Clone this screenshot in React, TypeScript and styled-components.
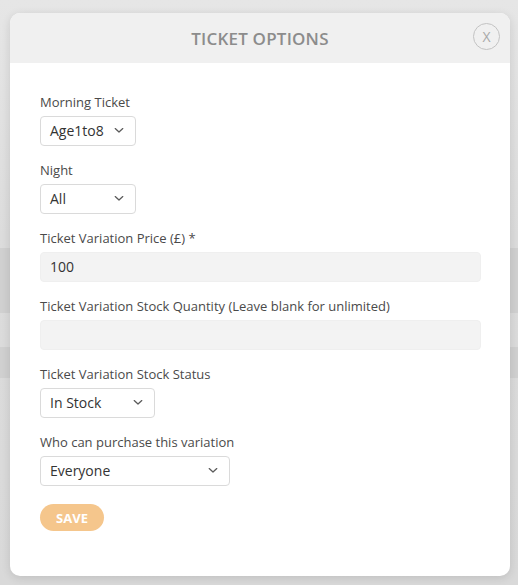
import React from "react";
import styled, { createGlobalStyle } from "styled-components";

const Global = createGlobalStyle`
  html, body { margin: 0; padding: 0; }
  body {
    width: 518px;
    height: 585px;
    overflow: hidden;
    background: #dedede;
    font-family: "Open Sans", "Noto Sans", Arial, sans-serif;
  }
`;

const Page = styled.div`
  position: relative;
  width: 518px;
  height: 585px;
  display: flex;
  flex-direction: column;
  background: linear-gradient(#e6e6e6, #dcdcdc 40%, #d9d9d9);
`;

const Band = styled.div<{ $h: number; $dark?: boolean }>`
  height: ${(p) => p.$h}px;
  background: ${(p) => (p.$dark ? "#d0d0d0" : "transparent")};
`;

const Modal = styled.div`
  position: absolute;
  left: 10px;
  top: 13px;
  width: 500px;
  height: 563px;
  background: #fff;
  border-radius: 10px;
  overflow: hidden;
  box-shadow: 0 2px 10px rgba(0, 0, 0, 0.12);
  display: flex;
  flex-direction: column;
`;

const Header = styled.div`
  position: relative;
  height: 50px;
  background: #f0f0f0;
  display: flex;
  align-items: center;
  justify-content: center;
`;

const Title = styled.h2`
  margin: 0;
  font-size: 17px;
  font-weight: 600;
  color: #8c8c8c;
  letter-spacing: 0.2px;
`;

const Close = styled.button`
  position: absolute;
  right: 10px;
  top: 10px;
  width: 27px;
  height: 27px;
  border-radius: 50%;
  border: 1px solid #c2c2c2;
  background: transparent;
  color: #a8a8a8;
  font-family: "Open Sans", Arial, sans-serif;
  font-size: 14px;
  font-weight: 400;
  padding: 0 0 1px;
  display: flex;
  align-items: center;
  justify-content: center;
`;

const Body = styled.div`
  padding: 30px 29px 0 30px;
  display: flex;
  flex-direction: column;
`;

const Group = styled.div`
  display: flex;
  flex-direction: column;
  align-items: flex-start;
  margin-bottom: 15px;
`;

const Label = styled.label`
  font-size: 13px;
  line-height: 18px;
  color: #4a4a4a;
  margin-bottom: 5px;
`;

const SelectBox = styled.div<{ $w: number }>`
  box-sizing: border-box;
  width: ${(p) => p.$w}px;
  height: 30px;
  border: 1px solid #dadada;
  border-radius: 4px;
  background: #fff;
  display: flex;
  align-items: center;
  justify-content: space-between;
  padding: 0 11px 1px 9px;
  font-size: 14px;
  color: #333;
`;

const Input = styled.div`
  box-sizing: border-box;
  width: 441px;
  height: 30px;
  border: 1px solid #efefef;
  border-radius: 4px;
  background: #f3f3f3;
  display: flex;
  align-items: center;
  padding: 0 9px 1px;
  font-size: 14px;
  color: #333;
`;

const Save = styled.button`
  margin-top: 3px;
  align-self: flex-start;
  width: 64px;
  height: 27px;
  border: none;
  border-radius: 14px;
  background: #f5c68c;
  color: #fff;
  font-family: "Open Sans", Arial, sans-serif;
  font-size: 13px;
  font-weight: 700;
  padding: 0;
`;

const Chevron = () => (
  <svg width="10" height="7" viewBox="0 0 10 7" fill="none">
    <path d="M1.2 1.6 L5 5 L8.8 1.6" stroke="#5a5a5a" strokeWidth="1.3" strokeLinecap="round" strokeLinejoin="round" />
  </svg>
);

const Select = ({ w, value }: { w: number; value: string }) => (
  <SelectBox $w={w}>
    <span>{value}</span>
    <Chevron />
  </SelectBox>
);

export default function App() {
  return (
    <>
      <Global />
      <Page>
        <Band $h={248} />
        <Band $h={65} $dark />
        <Band $h={34} />
        <Band $h={31} $dark />
        <Modal>
          <Header>
            <Title>TICKET OPTIONS</Title>
            <Close>X</Close>
          </Header>
          <Body>
            <Group>
              <Label>Morning Ticket</Label>
              <Select w={96} value="Age1to8" />
            </Group>
            <Group>
              <Label>Night</Label>
              <Select w={96} value="All" />
            </Group>
            <Group>
              <Label>Ticket Variation Price (£) *</Label>
              <Input>100</Input>
            </Group>
            <Group>
              <Label>Ticket Variation Stock Quantity (Leave blank for unlimited)</Label>
              <Input />
            </Group>
            <Group>
              <Label>Ticket Variation Stock Status</Label>
              <Select w={115} value="In Stock" />
            </Group>
            <Group>
              <Label>Who can purchase this variation</Label>
              <Select w={190} value="Everyone" />
            </Group>
            <Save>SAVE</Save>
          </Body>
        </Modal>
      </Page>
    </>
  );
}
